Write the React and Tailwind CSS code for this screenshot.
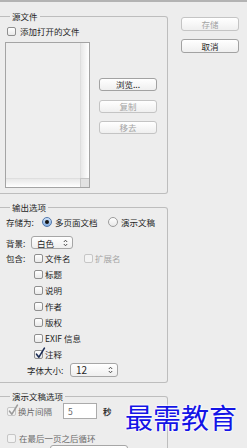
import React from "react";

const Checkbox = ({ checked, disabled }) => (
  <span
    className={`relative inline-block w-[9px] h-[9px] shrink-0 rounded-[2px] border ${
      disabled
        ? "border-[#c6c6c6] bg-[#f3f3f3]"
        : "border-[#8f8f8f] bg-linear-to-b from-white to-[#e9e9e9]"
    }`}
  >
    {checked && (
      <svg className="absolute left-[0px] top-[-4px]" width="11" height="12" viewBox="0 0 11 12">
        <path
          d="M1.5 7.2 L3.9 10.2 L9.4 1.2"
          fill="none"
          stroke={disabled ? "#9b9b9b" : "#1b2c55"}
          strokeWidth="1.6"
          strokeLinecap="round"
          strokeLinejoin="round"
        />
      </svg>
    )}
  </span>
);

const Radio = ({ checked }) =>
  checked ? (
    <span className="flex items-center justify-center w-[10px] h-[10px] shrink-0 rounded-full border border-[#5076ab] bg-linear-to-b from-[#cfe2f8] to-[#84ade0]">
      <span className="w-[4px] h-[4px] rounded-full bg-[#141414]" />
    </span>
  ) : (
    <span className="w-[10px] h-[10px] shrink-0 rounded-full border border-[#9c9c9c] bg-linear-to-b from-white to-[#e8e8e8]" />
  );

const Btn = ({ children, disabled, className = "" }) => (
  <div
    className={`flex items-center justify-center h-[13px] rounded-[3px] border bg-linear-to-b from-white to-[#efefef] leading-none ${
      disabled ? "border-[#c4c4c4] text-[#a4a4a4]" : "border-[#a2a2a2] text-[#1e1e1e]"
    } ${className}`}
  >
    {children}
  </div>
);

const Select = ({ value, className = "" }) => (
  <div
    className={`flex items-center justify-between rounded-[3px] border border-[#a6a6a6] bg-linear-to-b from-white to-[#efefef] pl-[5px] pr-[4px] ${className}`}
  >
    <span>{value}</span>
    <svg width="5" height="8" viewBox="0 0 5 8">
      <path
        d="M0.8 3 L2.5 1.2 L4.2 3 M0.8 5 L2.5 6.8 L4.2 5"
        fill="none"
        stroke="#3a3a3a"
        strokeWidth="0.9"
      />
    </svg>
  </div>
);

const Legend = ({ children, className = "" }) => (
  <legend className={`px-[2px] leading-[12px] ${className}`}>{children}</legend>
);

const includes = ["标题", "说明", "作者", "版权", "EXIF 信息"];

const App = () => {
  return (
    <div className="relative w-[247px] h-[448px] overflow-hidden bg-[#ededed] border-t-2 border-[#b3b3b3] text-[8.5px] leading-[12px] text-[#1f1f1f] font-['Noto_Sans_CJK_SC','Noto_Sans',sans-serif]">
      <div className="flex">
        {/* left column with group boxes */}
        <div className="w-[168px] pt-[8px]">
          {/* 源文件 */}
          <fieldset className="border border-l-0 border-[#bdbdbd] rounded-r-[3px] pl-[5px] pb-[5px]">
            <Legend className="ml-[5px]">源文件</Legend>
            <div className="mt-[4px] ml-[2px] flex items-center h-[10px]">
              <Checkbox />
              <span className="ml-[4px]">添加打开的文件</span>
            </div>
            <div className="mt-[6px] flex">
              <div className="flex flex-col w-[85px] h-[146px] border border-[#a4a4a4] bg-[#eeeeee]">
                <div className="flex flex-1">
                  <div className="flex-1" />
                  <div className="w-[9px] border-l border-[#dedede] bg-linear-to-r from-[#e8e8e8] to-white" />
                </div>
                <div className="flex h-[9px]">
                  <div className="flex-1 border-t border-[#dedede] bg-linear-to-b from-[#e8e8e8] to-white" />
                  <div className="w-[9px] border-l border-t border-[#c6c6c6] bg-[#e2e2e2]" />
                </div>
              </div>
              <div className="ml-[9px] w-[58px] flex flex-col">
                <Btn className="mt-[36px]">浏览...</Btn>
                <Btn disabled className="mt-[9px]">复制</Btn>
                <Btn disabled className="mt-[8px]">移去</Btn>
              </div>
            </div>
          </fieldset>

          {/* 输出选项 */}
          <fieldset className="mt-[7px] border border-l-0 border-[#bdbdbd] rounded-r-[3px] pl-[6px] pb-[5px]">
            <Legend className="ml-[4px]">输出选项</Legend>
            <div className="mt-[3px] flex items-center h-[12px]">
              <span className="w-[36px]">存储为:</span>
              <Radio checked />
              <span className="ml-[3px] w-[53px]">多页面文档</span>
              <Radio />
              <span className="ml-[3px]">演示文稿</span>
            </div>
            <div className="mt-[8px] flex items-center">
              <span className="w-[25px]">背景:</span>
              <Select value="白色" className="w-[42px] h-[13px]" />
            </div>
            <div className="mt-[3px] flex flex-col gap-[4px]">
              <div className="flex items-center h-[12px]">
                <span className="w-[28px]">包含:</span>
                <Checkbox />
                <span className="ml-[2px] w-[39px]">文件名</span>
                <Checkbox disabled />
                <span className="ml-[2px] text-[#a6a6a6]">扩展名</span>
              </div>
              {includes.map((label) => (
                <div key={label} className="flex items-center h-[12px] pl-[28px]">
                  <Checkbox />
                  <span className="ml-[2px]">{label}</span>
                </div>
              ))}
              <div className="flex items-center h-[12px] pl-[28px]">
                <Checkbox checked />
                <span className="ml-[2px]">注释</span>
              </div>
            </div>
            <div className="mt-[3px] flex items-center h-[14px] pl-[21px]">
              <span className="w-[43px]">字体大小:</span>
              <Select value="12" className="w-[48px] h-[14px] text-[10px]" />
            </div>
          </fieldset>

          {/* 演示文稿选项 */}
          <fieldset className="mt-[7px] border border-l-0 border-[#bdbdbd] rounded-r-[3px] pl-[6px] pb-[5px]">
            <Legend className="ml-[4px]">演示文稿选项</Legend>
            <div className="mt-[1px] flex items-center h-[16px]">
              <span className="ml-[1px] flex">
                <Checkbox checked disabled />
              </span>
              <span className="ml-[2px] w-[45px] text-[#6b6b6b]">换片间隔</span>
              <div className="flex items-center w-[34px] h-[16px] border border-[#ababab] bg-white pl-[4px] text-[#666]">
                5
              </div>
              <span className="ml-[6px] font-bold text-[#333]">秒</span>
            </div>
            <div className="mt-[13px] flex items-center h-[12px]">
              <span className="ml-[1px] flex">
                <Checkbox disabled />
              </span>
              <span className="ml-[3px] text-[#6b6b6b]">在最后一页之后循环</span>
            </div>
            <div className="mt-[1px] flex items-center h-[16px]">
              <span className="w-[44px] text-[#6b6b6b]">过渡效果:</span>
              <Select value="无" className="w-[78px] h-[16px]" />
            </div>
          </fieldset>
        </div>

        {/* right column buttons */}
        <div className="flex-1 pl-[13px] pt-[15px] flex flex-col gap-[8px]">
          <Btn disabled className="w-[58px] h-[14px]">存储</Btn>
          <Btn className="w-[58px] h-[14px]">取消</Btn>
        </div>
      </div>

      {/* watermark */}
      <div className="absolute left-[125px] top-[401px] text-[28px] leading-none text-[#1414e6] [text-shadow:0_0_2px_#fff,0_0_2px_#fff,0_0_3px_#fff]">
        最需教育
      </div>
    </div>
  );
};

export default App;
